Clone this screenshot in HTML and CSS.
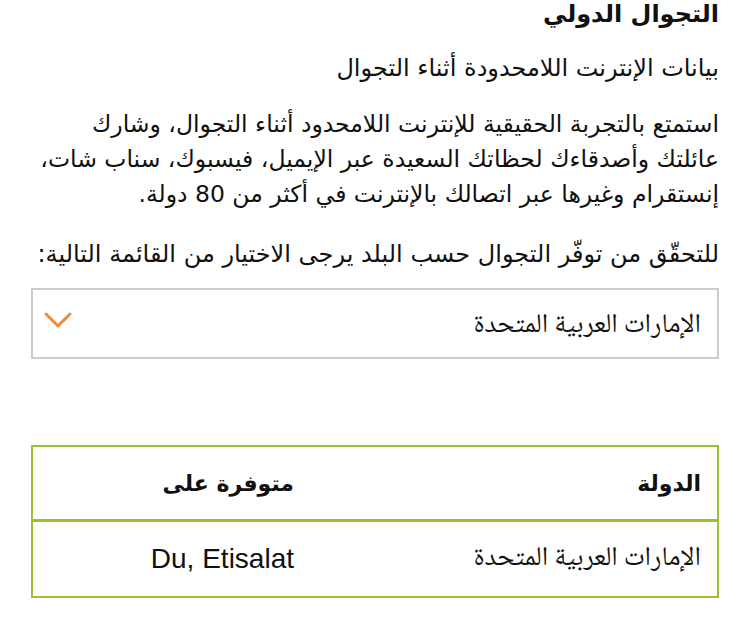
FILE: index.html
```html
<!DOCTYPE html>
<html lang="ar" dir="rtl">
<head>
<meta charset="utf-8">
<link rel="stylesheet" href="styles.css">
</head>
<body>
<main class="page">
  <h1 class="title">التجوال الدولي</h1>
  <p class="lead">بيانات الإنترنت اللامحدودة أثناء التجوال</p>
  <p class="text">استمتع بالتجربة الحقيقية للإنترنت اللامحدود أثناء التجوال، وشارك عائلتك وأصدقاءك لحظاتك السعيدة عبر الإيميل، فيسبوك، سناب شات، إنستقرام وغيرها عبر اتصالك بالإنترنت في أكثر من 80 دولة.</p>
  <p class="text check">للتحقّق من توفّر التجوال حسب البلد يرجى الاختيار من القائمة التالية:</p>
  <div class="select">
    <span class="select-value naskh">الإمارات العربية المتحدة</span>
    <svg class="chevron" width="30" height="18" viewBox="0 0 30 18"><path d="M3 3 L15 15 L27 3" fill="none" stroke="#ee8a3a" stroke-width="3" stroke-linecap="round" stroke-linejoin="round"/></svg>
  </div>
  <table class="table">
    <thead>
      <tr><th class="c1">الدولة</th><th class="c2">متوفرة على</th></tr>
    </thead>
    <tbody>
      <tr><td class="c1 naskh">الإمارات العربية المتحدة</td><td class="c2 latin">Du, Etisalat</td></tr>
    </tbody>
  </table>
</main>
</body>
</html>
```
FILE: styles.css
```css
html, body {
  margin: 0;
  padding: 0;
  background: #fff;
}
body {
  font-family: "DejaVu Sans", "Noto Sans", sans-serif;
  color: #111;
}
.page {
  padding: 0 31px;
  margin-top: -4px;
}
.title {
  font-size: 24px;
  font-weight: bold;
  margin: 0;
  line-height: 36px;
}
.lead {
  font-size: 24px;
  margin: 19px 0 0;
  line-height: 34px;
}
.text {
  font-size: 23.5px;
  margin: 22px 0 0;
  line-height: 35px;
}
.check {
  font-size: 24px;
  margin-top: 25px;
  white-space: nowrap;
}
.naskh {
  font-family: "Noto Naskh Arabic", "Amiri", "Scheherazade", "DejaVu Sans", serif;
}
.select {
  margin-top: 16px;
  height: 67px;
  border: 2px solid #cccccc;
  display: flex;
  align-items: center;
  justify-content: space-between;
  padding: 0 16px 0 10px;
}
.select-value {
  font-size: 27px;
  margin-top: 4px;
}
.chevron {
  align-self: flex-start;
  margin-top: 21px;
}
.table {
  margin-top: 86px;
  width: 100%;
  border-collapse: collapse;
  border: 2px solid #9cc033;
}
.table th, .table td {
  text-align: right;
  padding: 0 16px;
}
.table th {
  height: 72px;
  border-bottom: 3px solid #9cc033;
  font-weight: bold;
  font-size: 22px;
}
.table td {
  height: 74px;
  font-size: 27px;
}
.c1 { width: 375px; }
.table td.latin {
  font-family: "Liberation Sans", Arial, sans-serif;
  font-size: 28px;
}
```
